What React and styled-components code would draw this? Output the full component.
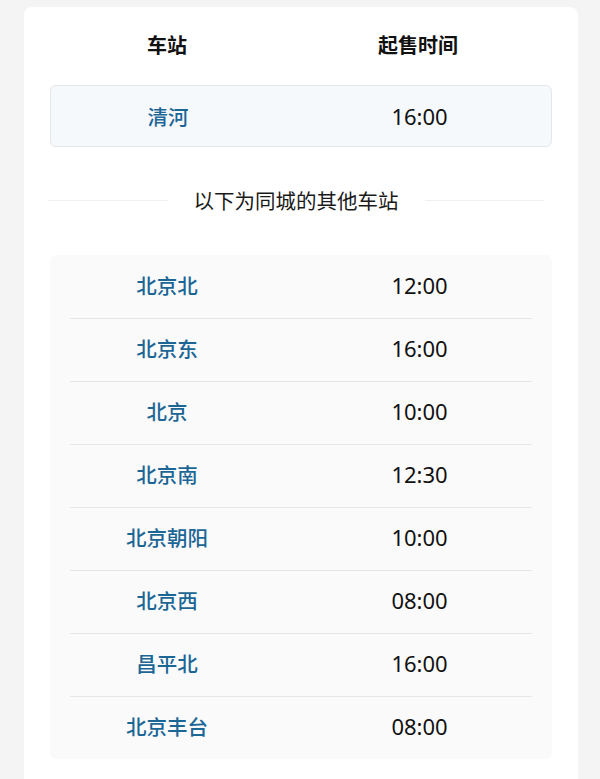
import React from "react";
import styled, { createGlobalStyle } from "styled-components";

const GlobalStyle = createGlobalStyle`
  body {
    margin: 0;
    background: #f4f4f4;
    font-family: "Noto Sans", "Noto Sans CJK SC", sans-serif;
  }
`;

const stations = [
  { name: "北京北", time: "12:00" },
  { name: "北京东", time: "16:00" },
  { name: "北京", time: "10:00" },
  { name: "北京南", time: "12:30" },
  { name: "北京朝阳", time: "10:00" },
  { name: "北京西", time: "08:00" },
  { name: "昌平北", time: "16:00" },
  { name: "北京丰台", time: "08:00" },
];

const App = () => {
  return (
    <Page>
      <GlobalStyle />
      <Card>
        <Header>
          <HeadCell>车站</HeadCell>
          <HeadCell>起售时间</HeadCell>
        </Header>
        <Current>
          <Name>清河</Name>
          <Time>16:00</Time>
        </Current>
        <Divider>
          <Line />
          <DividerText>以下为同城的其他车站</DividerText>
          <Line />
        </Divider>
        <List>
          {stations.map((s, i) => (
            <React.Fragment key={s.name}>
              {i > 0 && <Separator />}
              <Row>
                <Name>{s.name}</Name>
                <Time>{s.time}</Time>
              </Row>
            </React.Fragment>
          ))}
        </List>
      </Card>
    </Page>
  );
};

export default App;

const Page = styled.div`
  min-height: 779px;
  padding: 7px 22px 0 24px;
  box-sizing: border-box;
`;

const Card = styled.div`
  background: #fff;
  border-radius: 8px 8px 0 0;
  min-height: 772px;
  padding: 0 26px 40px 26px;
  box-sizing: border-box;
`;

const Header = styled.div`
  display: grid;
  grid-template-columns: 234px 1fr;
  height: 78px;
  align-items: center;
  padding-bottom: 4px;
  box-sizing: border-box;
`;

const HeadCell = styled.div`
  text-align: center;
  font-size: 20px;
  font-weight: 700;
  color: #111;
  font-family: "Noto Sans CJK SC", sans-serif;
`;

const Current = styled.div`
  display: grid;
  grid-template-columns: 234px 1fr;
  align-items: center;
  height: 60px;
  background: #f6f9fc;
  border: 1px solid #e3e6ea;
  border-radius: 6px;
`;

const Name = styled.div`
  text-align: center;
  color: #1c6696;
  font-size: 20.5px;
  font-weight: 500;
  font-family: "Noto Sans CJK SC", sans-serif;
`;

const Time = styled.div`
  text-align: center;
  color: #111;
  font-size: 22px;
  font-family: "Noto Sans", "Noto Sans CJK SC", sans-serif;
  padding-left: 3px;
`;

const Divider = styled.div`
  display: flex;
  align-items: center;
  height: 108px;
  gap: 26px;
  padding: 0 8px 2px 0;
  margin-left: -2px;
  box-sizing: border-box;
`;

const Line = styled.div`
  flex: 1;
  height: 1px;
  background: #f0f0f0;
`;

const DividerText = styled.div`
  font-size: 20.5px;
  color: #1a1a1a;
  font-family: "Noto Sans CJK SC", sans-serif;
`;

const List = styled.div`
  background: #fafafa;
  border-radius: 6px;
  padding-top: 1px;
`;

const Row = styled.div`
  display: grid;
  grid-template-columns: 234px 1fr;
  align-items: center;
  height: 62px;
  padding-bottom: 4px;
  box-sizing: border-box;
`;

const Separator = styled.div`
  height: 1px;
  margin: 0 20px;
  background: #e6e6e6;
`;
